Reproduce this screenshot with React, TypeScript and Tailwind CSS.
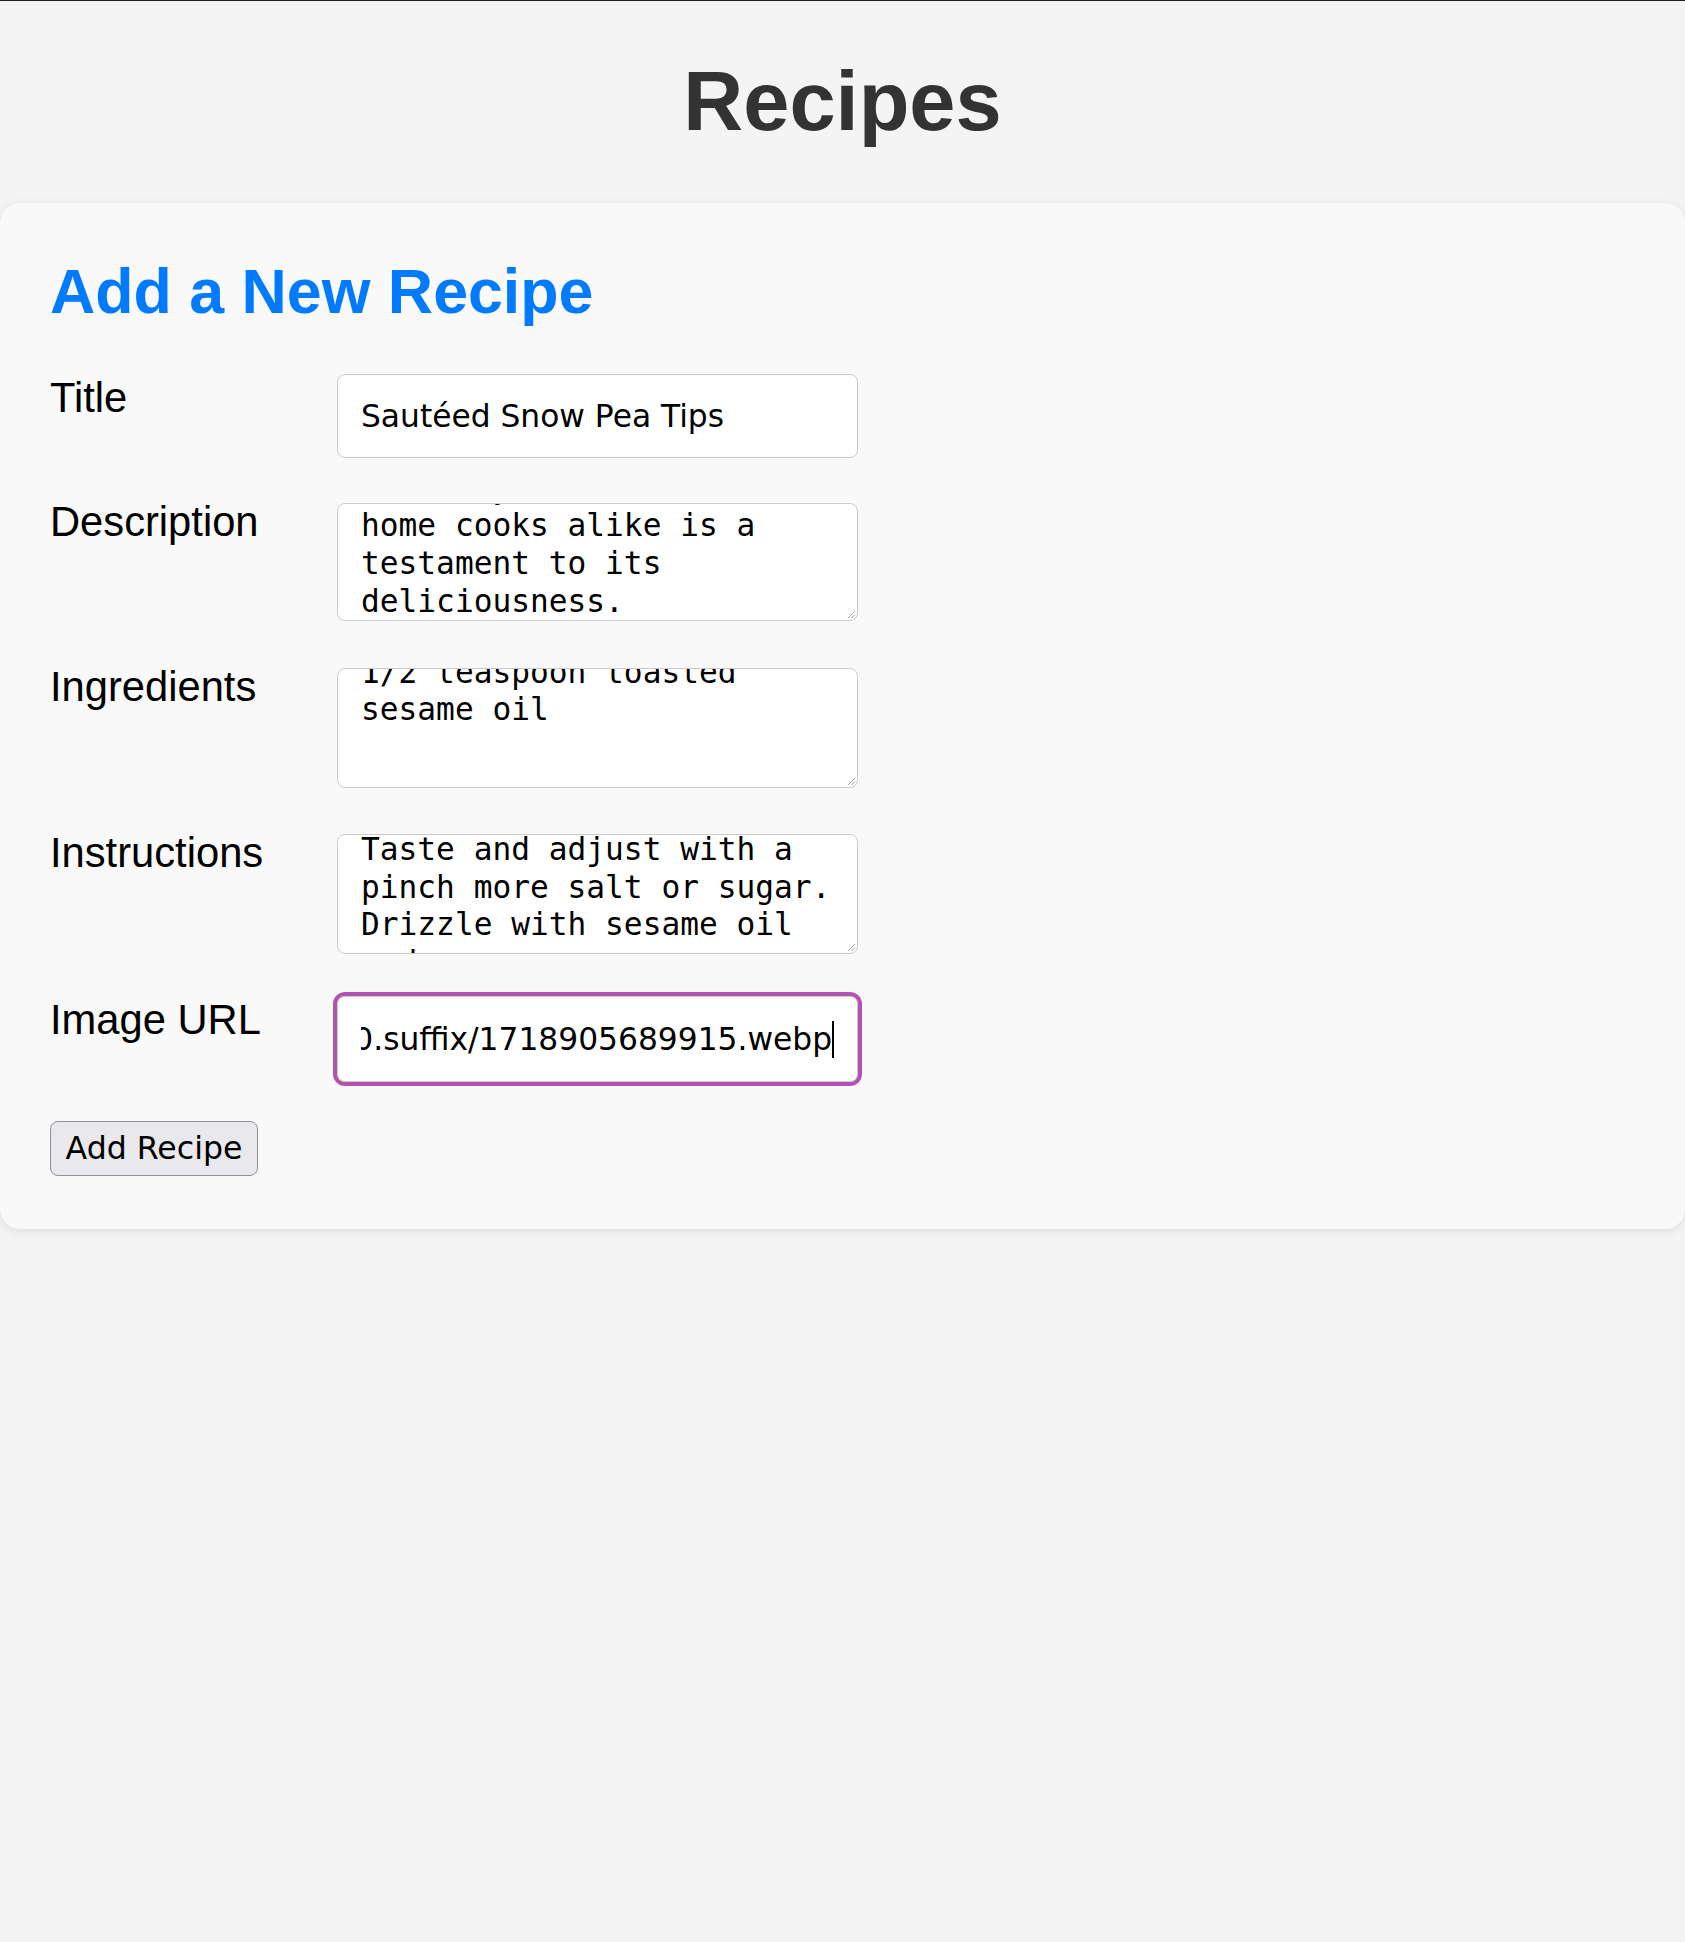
import React from "react";

function Grip() {
  return (
    <svg
      className="absolute bottom-[1px] right-[1px]"
      width="11"
      height="11"
      viewBox="0 0 11 11"
    >
      <path d="M10 3 L3 10 M10 6.5 L6.5 10" stroke="#a0a0a0" strokeWidth="1" />
    </svg>
  );
}

function TextBox({
  lines,
  offsetClass,
  heightClass,
}: {
  lines: string[];
  offsetClass: string;
  heightClass: string;
}) {
  return (
    <div
      className={
        "relative mt-[5px] w-[521px] overflow-hidden rounded-[8px] border border-[#cbcbcb] bg-white " +
        heightClass
      }
    >
      <div
        className={
          "whitespace-pre pl-[23px] font-['DejaVu_Sans_Mono',monospace] text-[31.2px] leading-[37.7px] text-black " +
          offsetClass
        }
      >
        {lines.map((l, i) => (
          <div key={i}>{l}</div>
        ))}
      </div>
      <Grip />
    </div>
  );
}

function Label({ children }: { children: React.ReactNode }) {
  return (
    <label className="w-[287px] shrink-0 font-['Liberation_Sans',Arial,sans-serif] text-[41.7px] leading-[47px] text-black">
      {children}
    </label>
  );
}

export default function App() {
  return (
    <div className="min-h-screen border-t border-[#1e1e1e] bg-[#f4f4f4] font-['Liberation_Sans',Arial,sans-serif]">
      <h1 className="mt-[54px] mb-[54px] text-center text-[83px] font-bold leading-[94px] text-[#333333]">
        Recipes
      </h1>
      <div className="rounded-[20px] bg-[#f9f9f9] px-[50px] pt-[53px] pb-[53px] shadow-[0_2px_10px_rgba(0,0,0,0.1)]">
        <h2 className="mb-[47px] text-[62.7px] font-bold leading-[71px] text-[#007bff]">
          Add a New Recipe
        </h2>

        <div className="mb-[40px] flex items-start">
          <Label>Title</Label>
          <input
            defaultValue="Sautéed Snow Pea Tips"
            className="h-[84px] w-[521px] rounded-[8px] border border-[#cbcbcb] bg-white px-[23px] font-['DejaVu_Sans',sans-serif] text-[31.3px] text-black outline-none"
          />
        </div>

        <div className="mb-[42px] flex items-start">
          <Label>Description</Label>
          <TextBox
            heightClass="h-[118px]"
            offsetClass="-mt-[34.6px]"
            lines={[
              "loved by both chefs and",
              "home cooks alike is a",
              "testament to its",
              "deliciousness.",
            ]}
          />
        </div>

        <div className="mb-[41px] flex items-start">
          <Label>Ingredients</Label>
          <TextBox
            heightClass="h-[120px]"
            offsetClass="-mt-[15.5px]"
            lines={["1/2 teaspoon toasted", "sesame oil"]}
          />
        </div>

        <div className="mb-[42px] flex items-start">
          <Label>Instructions</Label>
          <TextBox
            heightClass="h-[120px]"
            offsetClass="-mt-[4px]"
            lines={[
              "Taste and adjust with a",
              "pinch more salt or sugar.",
              "Drizzle with sesame oil",
              "and serve warm.",
            ]}
          />
        </div>

        <div className="mb-[39px] flex items-start">
          <Label>Image URL</Label>
          <div className="flex h-[86px] w-[521px] items-center rounded-[8px] border border-[#cbcbcb] bg-white px-[23px] outline-4 outline-solid outline-[#b452b4]">
            <div className="flex min-w-0 flex-1 justify-end overflow-hidden whitespace-nowrap font-['DejaVu_Sans',sans-serif] text-[31.3px] leading-[37px] text-black">
              <span>
                https://images.example.com/recipes/sauteed-snow-pea-tips/1200.suffix/1718905689915.webp
              </span>
            </div>
            <span className="h-[37px] w-[2px] shrink-0 bg-black" />
          </div>
        </div>

        <button className="h-[55px] w-[208px] rounded-[8px] border border-[#8f8f9d] bg-[#e9e9ed] font-['DejaVu_Sans',sans-serif] text-[31.6px] leading-[37px] text-black">
          Add Recipe
        </button>
      </div>
    </div>
  );
}
